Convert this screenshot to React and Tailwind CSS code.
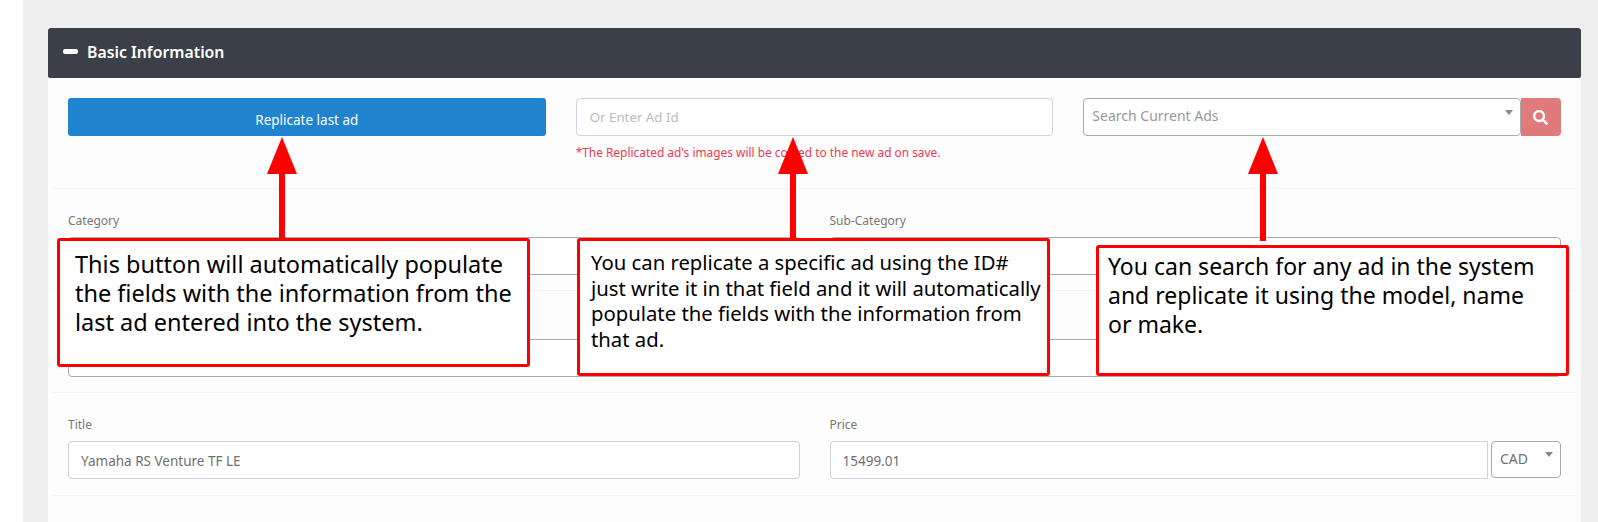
import React from 'react'
import { FaSearch } from 'react-icons/fa'

function Caret({ className }) {
  return <span className={`absolute w-0 h-0 border-x-[4px] border-t-[5px] border-x-transparent border-t-[#888] ${className}`}></span>
}

function Arrow({ className, height }) {
  return (
    <svg className={`absolute ${className}`} width="30" height={height} viewBox={`0 0 30 ${height}`}>
      <polygon points="15,0 30,37 18,37 18,200 12,200 12,37 0,37" fill="#ff0000" />
    </svg>
  )
}

function Callout({ className, children }) {
  return (
    <div className={`absolute bg-white border-[3px] border-[#ff0000] rounded-[3px] text-black ${className}`}>
      {children}
    </div>
  )
}

export default function App() {
  return (
    <div className="relative h-[522px] overflow-hidden bg-white pl-[23px] font-['Noto_Sans',sans-serif]">
      <div className="h-full bg-[#eeeeee] pl-[25px] pr-[17px] pt-[28px]">
        <div className="h-full bg-[#fdfdfd]">
          <div className="h-[50px] bg-[#3a3f48] rounded-t-[3px] rounded-b-[2px] flex items-center pl-[15px] gap-[9px]">
            <span className="w-[15px] h-[5px] mb-[3px] bg-white rounded-[2px]"></span>
            <span className="text-white text-[15.8px] font-semibold">Basic Information</span>
          </div>
          <div className="px-[5px]">
            <div className="border-b border-[#f3f3f7] px-[15px] pt-[20px] h-[111px]">
              <div className="grid grid-cols-3 gap-[30px]">
                <button className="h-[38px] bg-[#2083cf] rounded-[3px] text-white text-[13.5px] pt-[7px]">Replicate last ad</button>
                <div>
                  <input placeholder="Or Enter Ad Id" className="w-full h-[38px] px-[13px] bg-white border border-[#ced4da] rounded-[4px] text-[13.3px] placeholder:text-[#bbbbbb]" />
                  <p className="mt-[8px] text-[11.9px] leading-[16px] text-[#ea3a50]">*The Replicated ad's images will be copied to the new ad on save.</p>
                </div>
                <div className="flex">
                  <div className="relative flex-1 h-[38px] bg-white border border-[#aaaaaa] rounded-[4px] pl-[8px] text-[14px] leading-[33px] text-[#999999]">
                    Search Current Ads
                    <Caret className="right-[7px] top-[11px]" />
                  </div>
                  <div className="w-[40px] h-[38px] bg-[#e07b7b] rounded-r-[4px] flex items-center justify-center text-white text-[15px]">
                    <FaSearch />
                  </div>
                </div>
              </div>
            </div>

            <div className="border-b border-[#f3f3f7] px-[15px] pt-[22px] pb-[15px]">
              <div className="grid grid-cols-2 gap-[30px]">
                <div>
                  <div className="h-[20px] mb-[6px] text-[12px] leading-[20px] text-[#777777]">Category</div>
                  <div className="h-[38px] bg-white border border-[#aaaaaa] rounded-[4px]"></div>
                </div>
                <div>
                  <div className="h-[20px] mb-[6px] text-[12px] leading-[20px] text-[#777777]">Sub-Category</div>
                  <div className="h-[38px] bg-white border border-[#aaaaaa] rounded-[4px]"></div>
                </div>
              </div>
            </div>

            <div className="border-b border-[#f3f3f7] px-[15px] pt-[48px] pb-[15px]">
              <div className="h-[38px] bg-white border border-[#aaaaaa] rounded-[4px]"></div>
            </div>

            <div className="border-b border-[#f3f3f7] px-[15px] pt-[22px] pb-[16px]">
              <div className="grid grid-cols-2 gap-[30px]">
                <div>
                  <div className="h-[20px] mb-[6px] text-[12px] leading-[20px] text-[#777777]">Title</div>
                  <input defaultValue="Yamaha RS Venture TF LE" className="w-full h-[38px] px-[12px] pt-[1px] bg-white border border-[#ced4da] rounded-[4px] text-[13.5px] text-[#707070]" />
                </div>
                <div>
                  <div className="h-[20px] mb-[6px] text-[12px] leading-[20px] text-[#777777]">Price</div>
                  <div className="flex gap-[3px]">
                    <input defaultValue="15499.01" className="flex-1 min-w-0 h-[38px] px-[12px] pt-[1px] bg-white border border-[#ced4da] rounded-l-[4px] text-[13.5px] text-[#707070]" />
                    <div className="relative w-[70px] h-[37px] bg-white border border-[#aaaaaa] rounded-[4px] pl-[8px] text-[14px] leading-[34px] text-[#707070]">
                      CAD
                      <Caret className="right-[7px] top-[10px]" />
                    </div>
                  </div>
                </div>
              </div>
            </div>
          </div>
        </div>
      </div>

      <Arrow className="left-[267px] top-[137px]" height={102} />
      <Arrow className="left-[778px] top-[137px]" height={102} />
      <Arrow className="left-[1248px] top-[137px]" height={104} />

      <Callout className="left-[57px] top-[238px] w-[473px] h-[129px] pl-[15px] pt-[9px] text-[23.5px] leading-[29px]">
        This button will automatically populate<br />the fields with the information from the<br />last ad entered into the system.
      </Callout>
      <Callout className="left-[577px] top-[238px] w-[473px] h-[138px] pl-[11px] pt-[9px] text-[20.3px] leading-[25.5px]">
        You can replicate a specific ad using the ID#<br />just write it in that field and it will automatically<br />populate the fields with the information from<br />that ad.
      </Callout>
      <Callout className="left-[1096px] top-[245px] w-[473px] h-[131px] pl-[9px] pt-[4px] text-[23px] leading-[29px]">
        You can search for any ad in the system<br />and replicate it using the model, name<br />or make.
      </Callout>
    </div>
  )
}
